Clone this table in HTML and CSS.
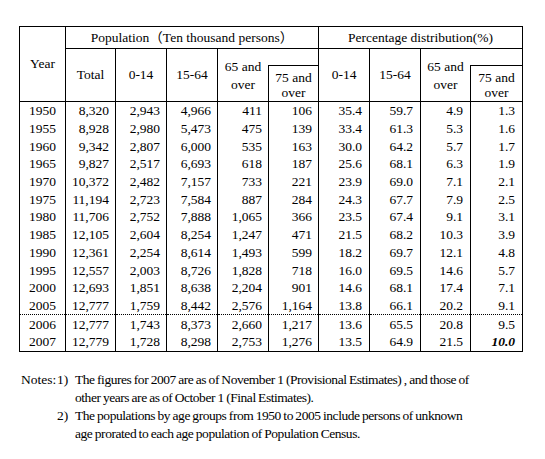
FILE: index.html
```html
<!DOCTYPE html>
<html lang="en">
<head>
	<meta charset="UTF-8">
	<link rel="stylesheet" href="styles.css">
	<title>Population by Age Group</title>
</head>
<body>

<div id="wrapper">
	<table class="pop_table">
		<colgroup>
			<col class="c_year">
			<col class="c_total">
			<col class="c_w51">
			<col class="c_w51">
			<col class="c_w51">
			<col class="c_w50">
			<col class="c_w51">
			<col class="c_w51">
			<col class="c_w50">
			<col class="c_w52">
		</colgroup>
		<thead>
			<tr class="head_a">
				<th rowspan="3">Year</th>
				<th colspan="5">Population（Ten thousand persons）</th>
				<th colspan="4">Percentage distribution(%)</th>
			</tr>
			<tr class="head_b">
				<th rowspan="2">Total</th>
				<th rowspan="2">0-14</th>
				<th rowspan="2">15-64</th>
				<th rowspan="2" class="over65">65 and<br>over</th>
				<th class="blank"></th>
				<th rowspan="2">0-14</th>
				<th rowspan="2">15-64</th>
				<th rowspan="2" class="over65">65 and<br>over</th>
				<th class="blank"></th>
			</tr>
			<tr class="head_c">
				<th class="over75">75 and<br>over</th>
				<th class="over75">75 and<br>over</th>
			</tr>
		</thead>
		<tbody>
			<tr><td>1950</td><td>8,320</td><td>2,943</td><td>4,966</td><td>411</td><td>106</td><td class="pct">35.4</td><td class="pct">59.7</td><td class="pct">4.9</td><td class="pct">1.3</td></tr>
			<tr><td>1955</td><td>8,928</td><td>2,980</td><td>5,473</td><td>475</td><td>139</td><td class="pct">33.4</td><td class="pct">61.3</td><td class="pct">5.3</td><td class="pct">1.6</td></tr>
			<tr><td>1960</td><td>9,342</td><td>2,807</td><td>6,000</td><td>535</td><td>163</td><td class="pct">30.0</td><td class="pct">64.2</td><td class="pct">5.7</td><td class="pct">1.7</td></tr>
			<tr><td>1965</td><td>9,827</td><td>2,517</td><td>6,693</td><td>618</td><td>187</td><td class="pct">25.6</td><td class="pct">68.1</td><td class="pct">6.3</td><td class="pct">1.9</td></tr>
			<tr><td>1970</td><td>10,372</td><td>2,482</td><td>7,157</td><td>733</td><td>221</td><td class="pct">23.9</td><td class="pct">69.0</td><td class="pct">7.1</td><td class="pct">2.1</td></tr>
			<tr><td>1975</td><td>11,194</td><td>2,723</td><td>7,584</td><td>887</td><td>284</td><td class="pct">24.3</td><td class="pct">67.7</td><td class="pct">7.9</td><td class="pct">2.5</td></tr>
			<tr><td>1980</td><td>11,706</td><td>2,752</td><td>7,888</td><td>1,065</td><td>366</td><td class="pct">23.5</td><td class="pct">67.4</td><td class="pct">9.1</td><td class="pct">3.1</td></tr>
			<tr><td>1985</td><td>12,105</td><td>2,604</td><td>8,254</td><td>1,247</td><td>471</td><td class="pct">21.5</td><td class="pct">68.2</td><td class="pct">10.3</td><td class="pct">3.9</td></tr>
			<tr><td>1990</td><td>12,361</td><td>2,254</td><td>8,614</td><td>1,493</td><td>599</td><td class="pct">18.2</td><td class="pct">69.7</td><td class="pct">12.1</td><td class="pct">4.8</td></tr>
			<tr><td>1995</td><td>12,557</td><td>2,003</td><td>8,726</td><td>1,828</td><td>718</td><td class="pct">16.0</td><td class="pct">69.5</td><td class="pct">14.6</td><td class="pct">5.7</td></tr>
			<tr><td>2000</td><td>12,693</td><td>1,851</td><td>8,638</td><td>2,204</td><td>901</td><td class="pct">14.6</td><td class="pct">68.1</td><td class="pct">17.4</td><td class="pct">7.1</td></tr>
			<tr><td>2005</td><td>12,777</td><td>1,759</td><td>8,442</td><td>2,576</td><td>1,164</td><td class="pct">13.8</td><td class="pct">66.1</td><td class="pct">20.2</td><td class="pct">9.1</td></tr>
			<tr class="recent"><td>2006</td><td>12,777</td><td>1,743</td><td>8,373</td><td>2,660</td><td>1,217</td><td class="pct">13.6</td><td class="pct">65.5</td><td class="pct">20.8</td><td class="pct">9.5</td></tr>
			<tr><td>2007</td><td>12,779</td><td>1,728</td><td>8,298</td><td>2,753</td><td>1,276</td><td class="pct">13.5</td><td class="pct">64.9</td><td class="pct">21.5</td><td class="pct"><b class="provisional">10.0</b></td></tr>
		</tbody>
	</table>

	<div class="notes">
		<span class="notes_label">Notes:</span>
		<span class="note_num">1)</span>
		<p>The figures for 2007 are as of November 1 (Provisional Estimates) , and those of<br>other years are as of October 1 (Final Estimates).</p>
		<span class="note_num">2)</span>
		<p>The populations by age groups from 1950 to 2005 include persons of unknown<br>age prorated to each age population of Population Census.</p>
	</div><!-- end of notes -->
</div><!-- end of wrapper -->

</body>
</html>
```

FILE: styles.css
```css
body {
	margin: 0;
	background: #fff;
	color: #000;
	font-family: "Liberation Serif", "Noto Sans CJK JP", serif;
	font-size: 13.5px;
}

#wrapper {
	padding: 26px 0 0 19px;
}

.pop_table {
	border-collapse: collapse;
	table-layout: fixed;
	width: 504px;
	border: 1px solid #000;
}

	.c_year { width: 46px; }
	.c_total { width: 50px; }
	.c_w50 { width: 50px; }
	.c_w51 { width: 51px; }
	.c_w52 { width: 52px; }

.pop_table th {
	font-weight: normal;
	text-align: center;
	border: 1px solid #000;
	padding: 0;
	line-height: 18px;
}

.head_a { height: 22px; }
.head_b { height: 17px; }
.head_c { height: 36px; }

	.pop_table th.over65 {
		border-right: none;
		padding-top: 2px;
	}

	.pop_table th.blank {
		border-left: none;
		border-bottom: none;
	}

	.pop_table th.over75 {
		line-height: 15px;
		padding-top: 2px;
	}

.pop_table td {
	border-left: 1px solid #000;
	border-right: 1px solid #000;
	text-align: right;
	padding: 0 6px 0 0;
	height: 17.7px;
	line-height: 17px;
}

	.pop_table td:first-child {
		text-align: center;
		padding: 0;
	}

	.pop_table td.pct {
		padding-right: 7px;
	}

.recent td {
	border-top: 1px dotted #000;
}

.provisional {
	font-style: italic;
	font-weight: bold;
}

.notes {
	display: grid;
	grid-template-columns: 36px 18px 460px;
	margin-top: 19px;
	margin-left: 2px;
	line-height: 18px;
}

	.notes p {
		margin: 0;
		grid-column: 3;
		letter-spacing: -0.45px;
		word-spacing: -0.5px;
	}

	.notes .note_num {
		grid-column: 2;
	}
```
